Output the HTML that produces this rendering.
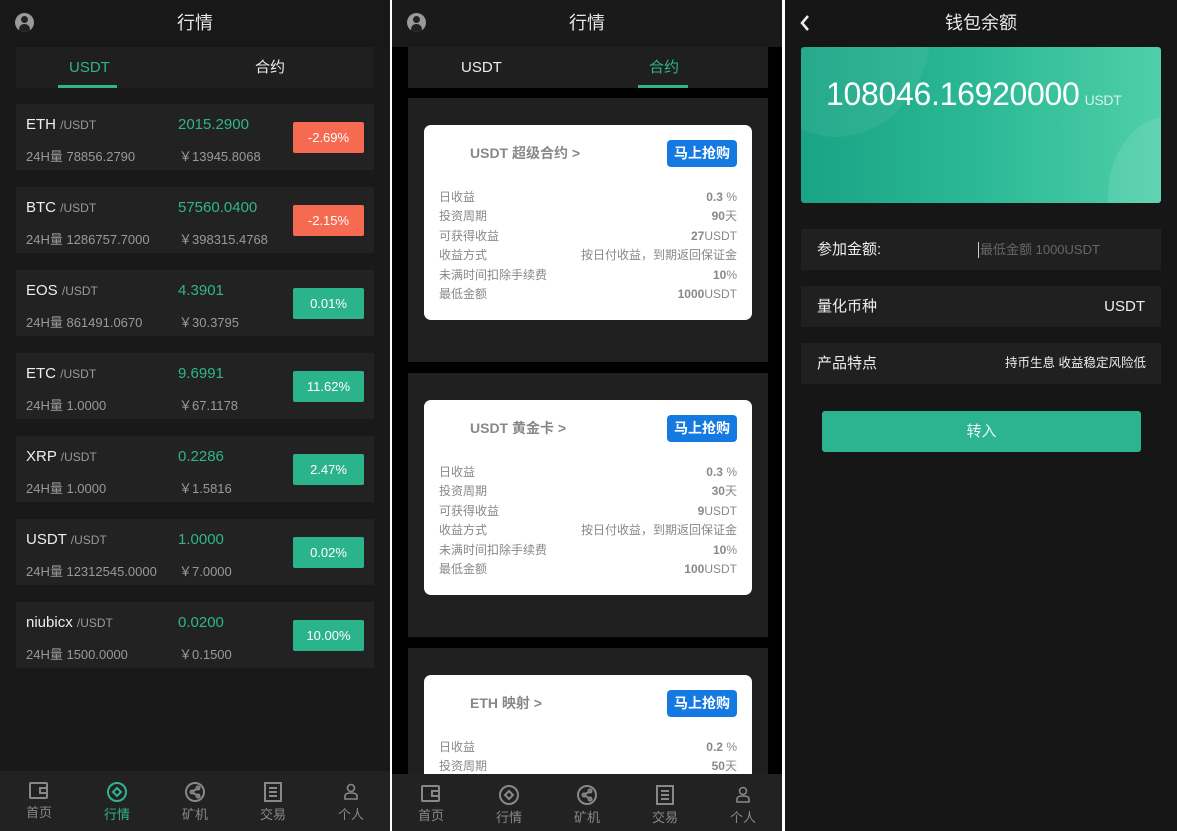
<!DOCTYPE html>
<html><head><meta charset="utf-8"><style>
*{margin:0;padding:0;box-sizing:border-box}
html,body{width:1177px;height:831px;overflow:hidden}
body{background:#fff;position:relative;font-family:"Liberation Sans","Noto Sans CJK SC",sans-serif}
.p{position:absolute;top:0;height:831px;overflow:hidden}
.a{position:absolute}
.hd{position:absolute;left:0;right:0;top:0;height:47px;text-align:center;line-height:46px;color:#e8e8e8;font-size:18px}
.av{position:absolute;left:15px;top:13px;width:19px;height:19px;border-radius:50%;background:#9a9a9a;overflow:hidden}
.av:before{content:"";position:absolute;left:6px;top:3px;width:7px;height:7px;border-radius:50%;background:#222}
.av:after{content:"";position:absolute;left:4px;top:11px;width:11px;height:9px;border-radius:5px 5px 0 0;background:#222}
.tabs{position:absolute;top:47px;height:41px;background:#1f1f1f;font-size:15px;color:#eee}
.tabs span{position:absolute;top:0;line-height:41px}
.ul{position:absolute;bottom:0;height:3px;width:59px;background:#2fb58e}
.row{position:absolute;left:16px;width:358px;height:66px;background:#222}
.row .n{position:absolute;left:10px;top:12px;color:#eee;font-size:15px}
.row .n small{color:#999;font-size:12px}
.row .v{position:absolute;left:10px;top:42px;color:#999;font-size:13px}
.row .pr{position:absolute;left:162px;top:12px;color:#2fb58e;font-size:15px}
.row .cn{position:absolute;left:163px;top:42px;color:#999;font-size:13px}
.row .b{position:absolute;left:277px;top:18px;width:71px;height:31px;border-radius:2px;color:#fff;font-size:13px;text-align:center;line-height:31px}
.r{background:#f56a50}.g{background:#2bb48c}
.nav{position:absolute;left:0;right:0;bottom:0;height:59px;background:#222}
.nav div{position:absolute;top:0;width:78px;text-align:center;color:#888;font-size:13px}
.nav div svg{display:block;margin:10px auto 0}
.nav div span{display:block;margin-top:1px}
.card{position:absolute;left:16px;width:360px;height:264px;background:#202020}
.wc{position:absolute;left:16px;top:27px;width:328px;height:195px;background:#fff;border-radius:7px}
.wc .t{position:absolute;left:46px;top:18px;font-size:14px;color:#888;font-weight:bold}
.wc .bt{position:absolute;left:243px;top:15px;width:70px;height:27px;background:#1479e0;border-radius:4px;color:#fff;font-size:14px;font-weight:bold;text-align:center;line-height:27px}
.wc .l{position:absolute;left:15px;right:15px;font-size:12px;color:#888;height:20px;line-height:20px;display:flex;justify-content:space-between}
.wc .l b{font-weight:normal}
.wc .l b i{font-style:normal;font-weight:bold}
.fr{position:absolute;left:16px;width:360px;height:41px;background:#202020;color:#eee;font-size:15px}
.fr span{position:absolute;top:0;line-height:41px}
</style></head><body>

<!-- Panel 1 -->
<div class="p" style="left:0;width:390px;background:#191919">
  <div class="hd" style="background:#181818">行情</div><div class="av"></div>
  <div class="tabs" style="left:16px;width:358px"><span style="left:53px;color:#2fb58e">USDT</span><span style="left:239px">合约</span><div class="ul" style="left:42px"></div></div>
  <div class="row" style="top:104px"><div class="n">ETH <small>/USDT</small></div><div class="v">24H量 78856.2790</div><div class="pr">2015.2900</div><div class="cn">￥13945.8068</div><div class="b r">-2.69%</div></div>
  <div class="row" style="top:187px"><div class="n">BTC <small>/USDT</small></div><div class="v">24H量 1286757.7000</div><div class="pr">57560.0400</div><div class="cn">￥398315.4768</div><div class="b r">-2.15%</div></div>
  <div class="row" style="top:270px"><div class="n">EOS <small>/USDT</small></div><div class="v">24H量 861491.0670</div><div class="pr">4.3901</div><div class="cn">￥30.3795</div><div class="b g">0.01%</div></div>
  <div class="row" style="top:353px"><div class="n">ETC <small>/USDT</small></div><div class="v">24H量 1.0000</div><div class="pr">9.6991</div><div class="cn">￥67.1178</div><div class="b g">11.62%</div></div>
  <div class="row" style="top:436px"><div class="n">XRP <small>/USDT</small></div><div class="v">24H量 1.0000</div><div class="pr">0.2286</div><div class="cn">￥1.5816</div><div class="b g">2.47%</div></div>
  <div class="row" style="top:519px"><div class="n">USDT <small>/USDT</small></div><div class="v">24H量 12312545.0000</div><div class="pr">1.0000</div><div class="cn">￥7.0000</div><div class="b g">0.02%</div></div>
  <div class="row" style="top:602px"><div class="n">niubicx <small>/USDT</small></div><div class="v">24H量 1500.0000</div><div class="pr">0.0200</div><div class="cn">￥0.1500</div><div class="b g">10.00%</div></div>
  <div class="nav" style="height:60px">
    <div style="left:0"><svg width="22" height="20" viewBox="0 0 22 20" fill="none" stroke="#888" stroke-width="2"><rect x="2" y="2" width="17" height="15" rx="1"/><rect x="12" y="7" width="7" height="5"/></svg><span>首页</span></div>
    <div style="left:78px;color:#2fb58e"><svg width="22" height="22" viewBox="0 0 22 22" fill="none" stroke="#2fb58e" stroke-width="2"><circle cx="11" cy="11" r="9"/><path d="M11 7l4 4-4 4-4-4z"/></svg><span>行情</span></div>
    <div style="left:156px"><svg width="22" height="22" viewBox="0 0 22 22" fill="none" stroke="#888" stroke-width="2"><circle cx="11" cy="11" r="9"/><circle cx="8" cy="11" r="1.5"/><circle cx="14" cy="7" r="1.5"/><circle cx="14" cy="15" r="1.5"/><path d="M9 10l4-2M9 12l4 2"/></svg><span>矿机</span></div>
    <div style="left:234px"><svg width="20" height="22" viewBox="0 0 20 22" fill="none" stroke="#888" stroke-width="2"><rect x="2" y="2" width="16" height="18"/><path d="M6 7h8M6 11h8M6 15h8"/></svg><span>交易</span></div>
    <div style="left:312px"><svg width="18" height="22" viewBox="0 0 18 22" fill="none" stroke="#888" stroke-width="1.6"><circle cx="9" cy="7" r="3.5"/><path d="M3 18v-3q0-3 6-3t6 3v3z"/></svg><span>个人</span></div>
  </div>
</div>

<!-- Panel 2 -->
<div class="p" style="left:392px;width:390px;background:#000">
  <div class="hd" style="background:#1a1a1a">行情</div><div class="av"></div>
  <div class="tabs" style="left:16px;width:360px"><span style="left:53px">USDT</span><span style="left:241px;color:#2fb58e">合约</span><div class="ul" style="left:230px;width:50px"></div></div>
  <div class="card" style="top:98px"><div class="wc">
    <div class="t">USDT 超级合约 &gt;</div><div class="bt">马上抢购</div>
    <div class="l" style="top:62px">日收益<b><i>0.3</i> %</b></div>
    <div class="l" style="top:81px">投资周期<b><i>90</i>天</b></div>
    <div class="l" style="top:101px">可获得收益<b><i>27</i>USDT</b></div>
    <div class="l" style="top:120px">收益方式<b>按日付收益，到期返回保证金</b></div>
    <div class="l" style="top:140px">未满时间扣除手续费<b><i>10</i>%</b></div>
    <div class="l" style="top:159px">最低金额<b><i>1000</i>USDT</b></div>
  </div></div>
  <div class="card" style="top:373px"><div class="wc">
    <div class="t">USDT 黄金卡 &gt;</div><div class="bt">马上抢购</div>
    <div class="l" style="top:62px">日收益<b><i>0.3</i> %</b></div>
    <div class="l" style="top:81px">投资周期<b><i>30</i>天</b></div>
    <div class="l" style="top:101px">可获得收益<b><i>9</i>USDT</b></div>
    <div class="l" style="top:120px">收益方式<b>按日付收益，到期返回保证金</b></div>
    <div class="l" style="top:140px">未满时间扣除手续费<b><i>10</i>%</b></div>
    <div class="l" style="top:159px">最低金额<b><i>100</i>USDT</b></div>
  </div></div>
  <div class="card" style="top:648px"><div class="wc">
    <div class="t">ETH 映射 &gt;</div><div class="bt">马上抢购</div>
    <div class="l" style="top:62px">日收益<b><i>0.2</i> %</b></div>
    <div class="l" style="top:81px">投资周期<b><i>50</i>天</b></div>
  </div></div>
  <div class="nav" style="height:57px">
    <div style="left:0"><svg width="22" height="20" viewBox="0 0 22 20" fill="none" stroke="#888" stroke-width="2"><rect x="2" y="2" width="17" height="15" rx="1"/><rect x="12" y="7" width="7" height="5"/></svg><span>首页</span></div>
    <div style="left:78px"><svg width="22" height="22" viewBox="0 0 22 22" fill="none" stroke="#888" stroke-width="2"><circle cx="11" cy="11" r="9"/><path d="M11 7l4 4-4 4-4-4z"/></svg><span>行情</span></div>
    <div style="left:156px"><svg width="22" height="22" viewBox="0 0 22 22" fill="none" stroke="#888" stroke-width="2"><circle cx="11" cy="11" r="9"/><circle cx="8" cy="11" r="1.5"/><circle cx="14" cy="7" r="1.5"/><circle cx="14" cy="15" r="1.5"/><path d="M9 10l4-2M9 12l4 2"/></svg><span>矿机</span></div>
    <div style="left:234px"><svg width="20" height="22" viewBox="0 0 20 22" fill="none" stroke="#888" stroke-width="2"><rect x="2" y="2" width="16" height="18"/><path d="M6 7h8M6 11h8M6 15h8"/></svg><span>交易</span></div>
    <div style="left:312px"><svg width="18" height="22" viewBox="0 0 18 22" fill="none" stroke="#888" stroke-width="1.6"><circle cx="9" cy="7" r="3.5"/><path d="M3 18v-3q0-3 6-3t6 3v3z"/></svg><span>个人</span></div>
  </div>
</div>

<!-- Panel 3 -->
<div class="p" style="left:785px;width:392px;background:#161616">
  <div class="hd" style="background:#161616">钱包余额</div>
  <svg class="a" style="left:14px;top:14px" width="12" height="18" viewBox="0 0 12 18"><path d="M9 2L3 9l6 7" fill="none" stroke="#eee" stroke-width="2.5"/></svg>
  <div class="a" style="left:16px;top:47px;width:360px;height:156px;border-radius:3px;overflow:hidden;background:linear-gradient(90deg,#19a485,#2bb995 50%,#4fcfaa)">
    <div class="a" style="left:-60px;top:-130px;width:190px;height:220px;border-radius:50%;background:rgba(255,255,255,.06)"></div>
    <div class="a" style="left:307px;top:70px;width:120px;height:160px;border-radius:50%;background:rgba(255,255,255,.1)"></div>
    <div class="a" style="left:25px;top:29px;color:#fff;font-size:32px;white-space:nowrap;letter-spacing:-0.3px">108046.16920000<span style="font-size:14px;color:#d6f2ea;margin-left:5px">USDT</span></div>
  </div>
  <div class="fr" style="top:229px"><span style="left:16px">参加金额:</span><span style="left:177px;top:13px;line-height:16px;font-size:13px;color:#666;border-left:1px solid #ccc;padding-left:1px">最低金额 1000USDT</span></div>
  <div class="fr" style="top:286px"><span style="left:16px">量化币种</span><span style="right:16px">USDT</span></div>
  <div class="fr" style="top:343px"><span style="left:16px">产品特点</span><span style="right:15px;font-size:12.5px">持币生息 收益稳定风险低</span></div>
  <div class="a" style="left:37px;top:411px;width:319px;height:41px;border-radius:3px;background:#2bb48f;color:#e8f7f1;font-size:15px;text-align:center;line-height:41px">转入</div>
</div>
</body></html>
